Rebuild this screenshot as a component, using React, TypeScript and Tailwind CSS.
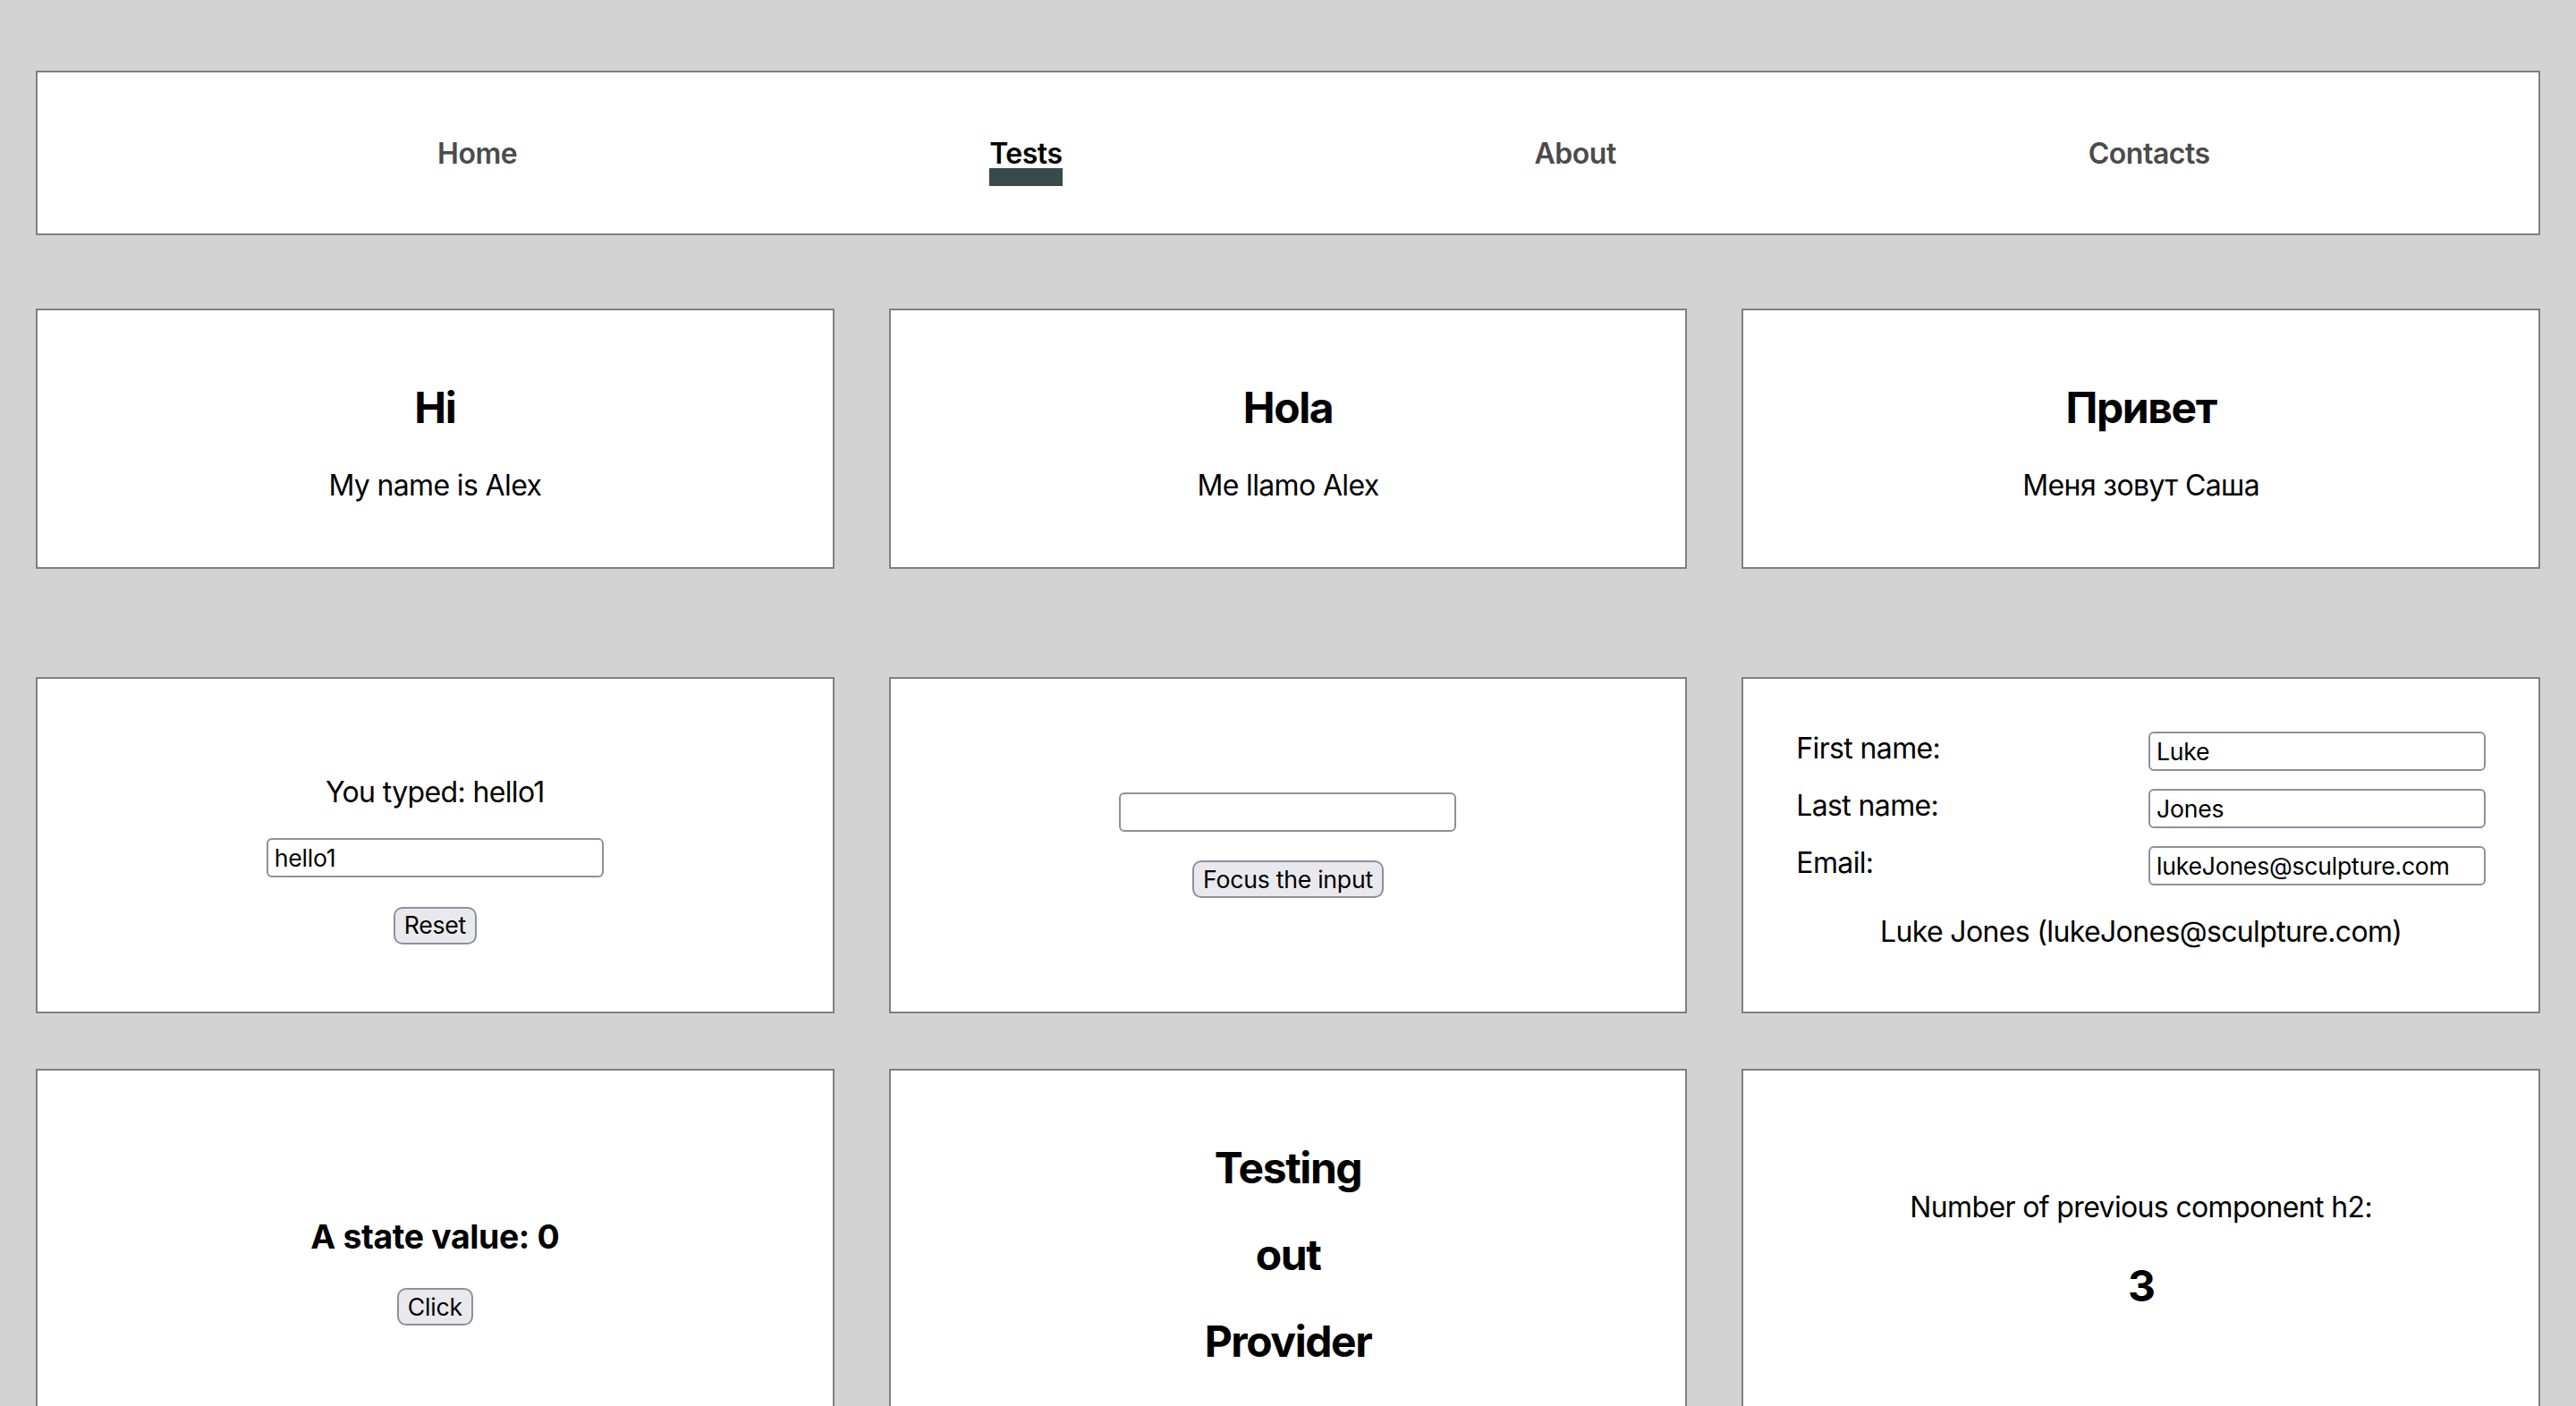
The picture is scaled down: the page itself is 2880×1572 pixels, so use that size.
export default function App() {
  const card = "border-2 border-[#808080] bg-white";
  const input =
    "h-[44px] w-[377px] rounded-[6px] border-2 border-[#8f8f9d] bg-white pl-[7px] text-[26.67px] tracking-[-0.01em] text-black outline-none";
  const button =
    "h-[42px] rounded-[10px] border-2 border-[#8f8f9d] bg-[#e9e9ed] px-[10px] text-[26.67px] tracking-[-0.01em] leading-none text-black";
  const h2 = "text-[48px] font-bold leading-[57px] tracking-[-0.03em]";
  const p = "text-[32px] leading-[38px] tracking-[-0.02em]";
  return (
    <div className="min-h-screen bg-[#d3d3d3] px-[40px] pt-[79px] pb-[40px] font-['Inter',sans-serif] text-black">
      <nav className="h-[184px] border-2 border-[#808080] bg-white">
        <ul className="flex items-start gap-[528px] pl-[447px] pt-[72px] text-[32px] font-semibold leading-[38px] tracking-[-0.015em]">
          <li className="text-[#4b4b4b]">Home</li>
          <li className="flex flex-col text-black">
            <span>Tests</span>
            <span className="-mt-[3px] h-[20px] w-full bg-[#374a4c]" />
          </li>
          <li className="text-[#4b4b4b]">About</li>
          <li className="text-[#4b4b4b]">Contacts</li>
        </ul>
      </nav>

      <section className="mt-[82px] grid grid-cols-3 gap-x-[61px]">
        {[
          ["Hi", "My name is Alex"],
          ["Hola", "Me llamo Alex"],
          ["Привет", "Меня зовут Саша"],
        ].map(([title, text]) => (
          <div key={title} className={`${card} px-[40px] py-[40px] text-center`}>
            <h2 className={`mt-[40px] mb-[40px] ${h2}`}>{title}</h2>
            <p className={`mb-[32px] ${p}`}>{text}</p>
          </div>
        ))}
      </section>

      <section className="mt-[121px] grid grid-cols-3 gap-x-[61px] gap-y-[62px]">
        <div className={`${card} flex flex-col items-center justify-center px-[40px]`}>
          <p className={`mt-[32px] mb-[32px] ${p}`}>You typed: hello1</p>
          <input className={input} defaultValue="hello1" />
          <button className={`${button} mt-[33px]`}>Reset</button>
        </div>

        <div className={`${card} flex flex-col items-center justify-center px-[40px]`}>
          <input className={input} defaultValue="" />
          <button className={`${button} mt-[32px]`}>Focus the input</button>
        </div>

        <div className={`${card} px-[40px] pt-[40px] pb-[40px]`}>
          <div className="mt-[19px] flex h-[44px] items-start justify-between px-[19px]">
            <label className={p}>First name:</label>
            <input className={input} defaultValue="Luke" />
          </div>
          <div className="mt-[20px] flex h-[44px] items-start justify-between px-[19px]">
            <label className={p}>Last name:</label>
            <input className={input} defaultValue="Jones" />
          </div>
          <div className="mt-[20px] flex h-[44px] items-start justify-between px-[19px]">
            <label className={p}>Email:</label>
            <input className={input} defaultValue="lukeJones@sculpture.com" />
          </div>
          <p className={`mt-[33px] mb-[30px] text-center ${p}`}>
            Luke Jones (lukeJones@sculpture.com)
          </p>
        </div>

        <div className={`${card} flex flex-col items-center justify-center px-[40px]`}>
          <h3 className="mt-[37px] text-[37.44px] font-bold leading-[45px] tracking-[-0.01em]">A state value: 0</h3>
          <button className={`${button} mt-[35px]`}>Click</button>
        </div>

        <div className={`${card} flex flex-col items-center gap-[40px] px-[40px] py-[80px] text-center`}>
          <h2 className={h2}>Testing</h2>
          <h2 className={h2}>out</h2>
          <h2 className={h2}>Provider</h2>
        </div>

        <div className={`${card} flex flex-col items-center justify-center px-[40px] text-center`}>
          <p className={`mt-[32px] ${p}`}>Number of previous component h2:</p>
          <h2 className={`mt-[40px] mb-[40px] ${h2}`}>3</h2>
        </div>
      </section>
    </div>
  );
}
